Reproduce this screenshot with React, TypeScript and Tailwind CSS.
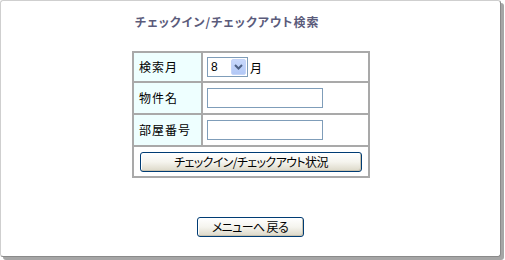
import React from "react";

const jp = "font-['Noto_Sans_CJK_JP','Noto_Sans',sans-serif]";

function XPButton({ children, w }: { children: React.ReactNode; w: string }) {
  return (
    <button
      type="button"
      className={`${w} h-[20px] rounded-[3px] border border-[#003c74] bg-gradient-to-b from-[#ffffff] via-[#f5f4ee] to-[#dcd8c8] text-[12px] leading-[18px] text-black tracking-[-0.6px] [font-feature-settings:'palt'] ${jp} shadow-[inset_-1px_-1px_0_#c9c3b0,inset_1px_1px_0_#ffffff]`}
    >
      {children}
    </button>
  );
}

export default function App() {
  return (
    <div className="w-[505px] h-[260px] bg-white">
      <div className="w-[501px] h-[257px] rounded-[3px] border border-[#cfcfcf] border-r-[#8a8a8a] border-b-[#8a8a8a] shadow-[3px_3px_0_#a6a6a6] bg-white flex flex-col">
        <div
          className={`pl-[134px] pt-[14px] text-[12px] leading-[14px] font-bold text-[#5b5b7b] tracking-[1px] [font-feature-settings:'palt'] ${jp}`}
        >
          チェックイン/チェックアウト検索
        </div>
        <div className="mt-[22px] ml-[131px] w-[238px] bg-[#a9a9a9] p-[2px] grid grid-cols-[67px_1fr] gap-[2px] text-[12px] text-black">
          <div className={`h-[28px] bg-[#eeffff] pl-[5px] flex items-center tracking-[1px] ${jp}`}>検索月</div>
          <div className="h-[28px] bg-white pl-[4px] flex items-center gap-[2px]">
            <div className="w-[41px] h-[20px] border border-[#7f9db9] bg-white flex items-center justify-between p-[1px]">
              <span className="pl-[2px] font-['Liberation_Sans',sans-serif] text-[12px] leading-none">8</span>
              <span className="w-[15px] h-[16px] rounded-[2px] bg-gradient-to-b from-[#c8d8fc] to-[#b2c8f6] border border-[#c4d4f8] flex items-center justify-center">
                <svg width="9" height="6" viewBox="0 0 9 6">
                  <path d="M1 1 L4.5 4.5 L8 1" fill="none" stroke="#4d6185" strokeWidth="2" />
                </svg>
              </span>
            </div>
            <span className={`${jp} leading-none mt-[2px]`}>月</span>
          </div>
          <div className={`h-[30px] bg-[#eeffff] pl-[5px] flex items-center tracking-[1px] ${jp}`}>物件名</div>
          <div className="h-[30px] bg-white pl-[4px] flex items-center">
            <div className="w-[116px] h-[20px] border border-[#7f9db9] bg-white" />
          </div>
          <div className={`h-[30px] bg-[#eeffff] pl-[5px] flex items-center tracking-[1px] ${jp}`}>部屋番号</div>
          <div className="h-[30px] bg-white pl-[4px] flex items-center">
            <div className="w-[116px] h-[20px] border border-[#7f9db9] bg-white" />
          </div>
          <div className="col-span-2 h-[29px] bg-white flex items-center justify-center">
            <XPButton w="w-[222px]">チェックイン/チェックアウト状況</XPButton>
          </div>
        </div>
        <div className="mt-[39px] flex justify-center pr-[1px]">
          <XPButton w="w-[107px]">メニューへ 戻る</XPButton>
        </div>
      </div>
    </div>
  );
}
